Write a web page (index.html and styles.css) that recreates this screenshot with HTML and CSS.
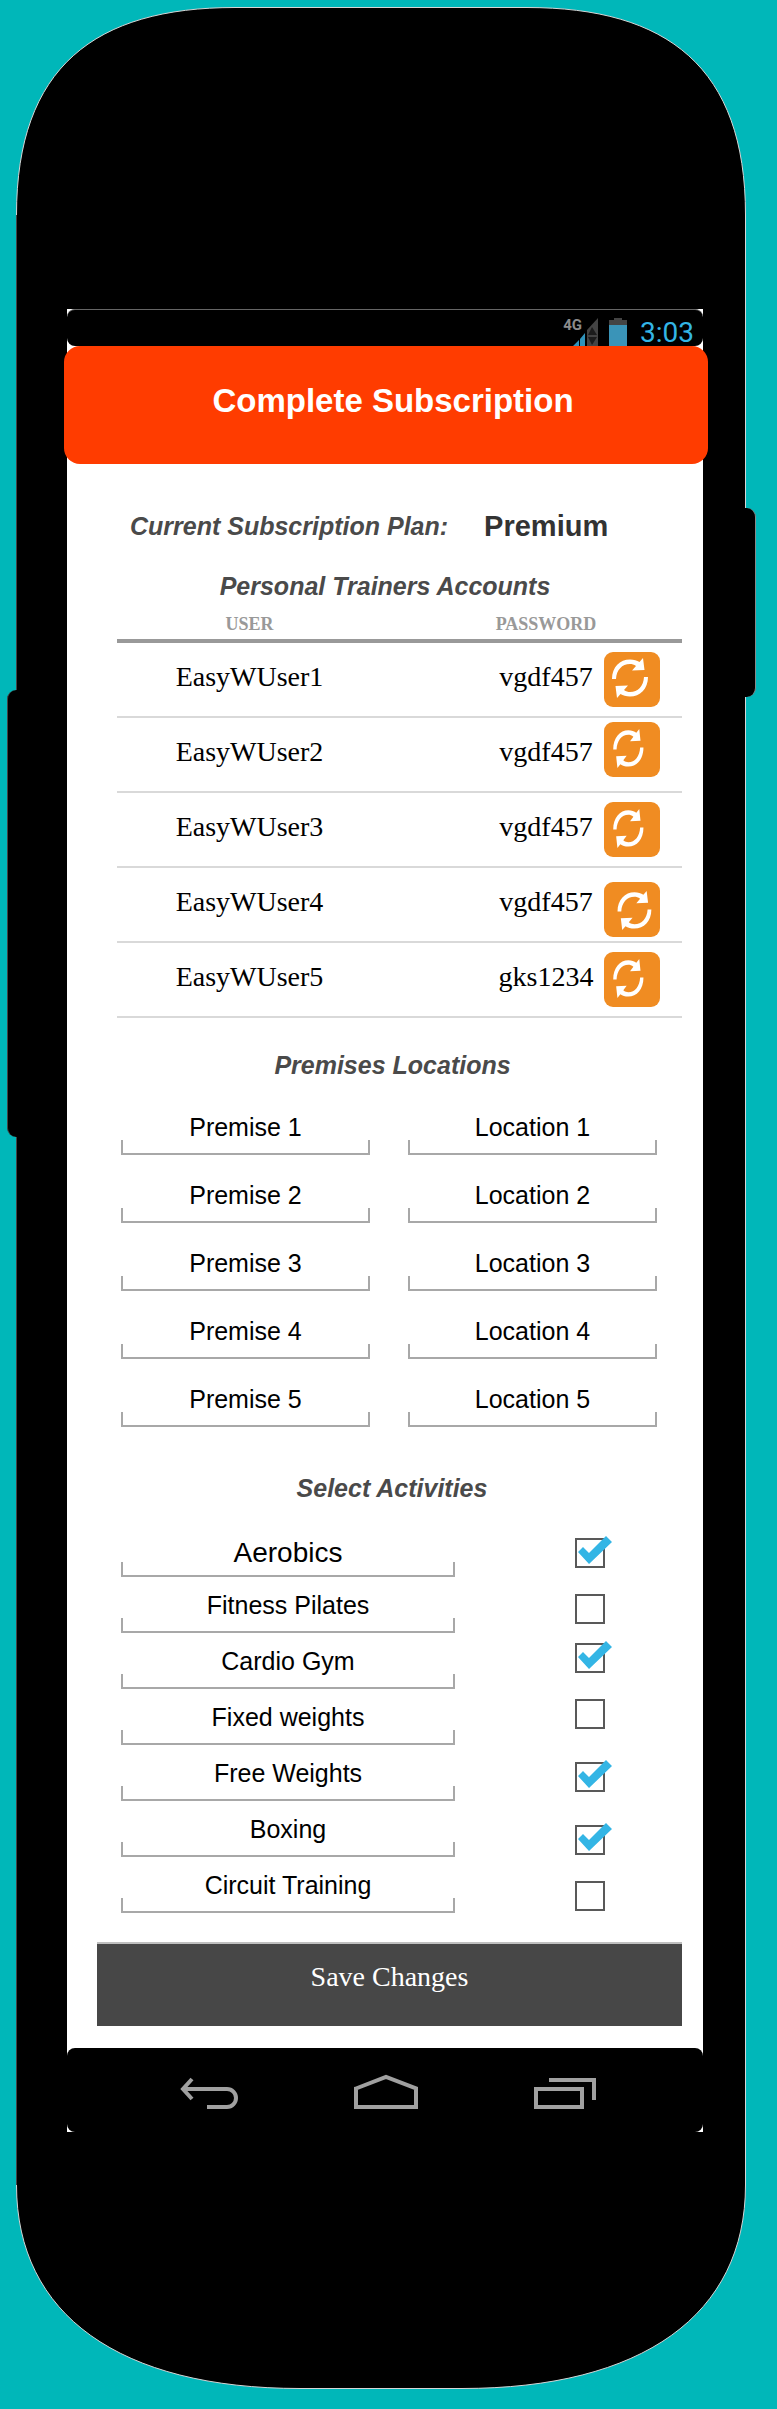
FILE: index.html
```html
<!DOCTYPE html>
<html lang="en">
<head>
<meta charset="utf-8">
<meta name="viewport" content="width=device-width, initial-scale=1">
<title>Complete Subscription</title>
<link rel="stylesheet" href="styles.css">
</head>
<body>
<svg class="sprite" aria-hidden="true">
  <defs>
    <path id="arrow" d="M8 27C8 15 16 7.500 26 7.500C30 7.500 33 8.500 35.500 10L39 6L40.500 18L28 18.500L32 14C30 12.500 28 12 26 12C18 12 12.500 18 12 27Z"/>
    <g id="arrows"><use href="#arrow"/><use href="#arrow" transform="rotate(180 26 26)"/></g>
    <symbol id="refresh-wide" viewBox="0 0 56 55"><use href="#arrows"/></symbol>
    <symbol id="refresh" viewBox="0 0 56 55"><use href="#arrows" transform="translate(2.500 1) scale(.84 .98)"/></symbol>
    <symbol id="refresh-low" viewBox="0 0 56 55"><use href="#arrows" transform="translate(6 3) scale(.94 .98)"/></symbol>
  </defs>
</svg>
<div class="device">
  <span class="side-key side-key--left"></span>
  <span class="side-key side-key--right"></span>
  <svg class="cap cap--top" viewBox="0 0 730 208" preserveAspectRatio="none" aria-hidden="true">
    <path d="M0.500 208C0.500 60 79 0.500 219 0.500H511C651 0.500 729.500 60 729.500 208"/>
  </svg>
  <div class="frame">
    <main class="screen">
      <div class="status">
        <span class="network">4G</span>
        <svg class="signal" viewBox="0 0 25 28" aria-hidden="true">
          <path fill="#2f93bb" d="M0 28L6 22V28ZM7 21L12 15V28H7Z"/>
          <path fill="#444" d="M14 12L25 0V28H14Z"/>
          <path fill="#1c1c1c" d="M15 17L19 9L24 17ZM15 19H24L19 27Z"/>
        </svg>
        <svg class="battery" viewBox="0 0 18 28" aria-hidden="true">
          <path fill="#444" d="M5 0H13V2H18V7H0V2H5Z"/>
          <path fill="#3a94b8" d="M0 7H18V28H0Z"/>
        </svg>
        <time class="clock">3:03</time>
      </div>
      <header class="header"><h1 class="title">Complete Subscription</h1></header>

      <div class="plan"><span class="plan-label">Current Subscription Plan:</span><strong class="plan-name">Premium</strong></div>

      <h2 class="heading heading--accounts">Personal Trainers Accounts</h2>
      <table class="accounts">
        <thead>
          <tr><th class="col-user" scope="col">USER</th><th class="col-password" scope="col">PASSWORD</th><td class="col-action"></td></tr>
        </thead>
        <tbody>
          <tr><td class="col-user">EasyWUser1</td><td class="col-password">vgdf457</td><td class="col-action"><button class="refresh" type="button" aria-label="New password for EasyWUser1"><svg class="refresh-icon"><use href="#refresh-wide"/></svg></button></td></tr>
          <tr><td class="col-user">EasyWUser2</td><td class="col-password">vgdf457</td><td class="col-action col-action--top"><button class="refresh" type="button" aria-label="New password for EasyWUser2"><svg class="refresh-icon"><use href="#refresh"/></svg></button></td></tr>
          <tr><td class="col-user">EasyWUser3</td><td class="col-password">vgdf457</td><td class="col-action"><button class="refresh" type="button" aria-label="New password for EasyWUser3"><svg class="refresh-icon"><use href="#refresh"/></svg></button></td></tr>
          <tr><td class="col-user">EasyWUser4</td><td class="col-password">vgdf457</td><td class="col-action col-action--bottom"><button class="refresh" type="button" aria-label="New password for EasyWUser4"><svg class="refresh-icon"><use href="#refresh-low"/></svg></button></td></tr>
          <tr><td class="col-user">EasyWUser5</td><td class="col-password">gks1234</td><td class="col-action"><button class="refresh" type="button" aria-label="New password for EasyWUser5"><svg class="refresh-icon"><use href="#refresh"/></svg></button></td></tr>
        </tbody>
      </table>

      <h2 class="heading heading--premises">Premises Locations</h2>
      <div class="premises">
        <input class="field" type="text" aria-label="Premise 1" value="Premise 1"><input class="field" type="text" aria-label="Location 1" value="Location 1">
        <input class="field" type="text" aria-label="Premise 2" value="Premise 2"><input class="field" type="text" aria-label="Location 2" value="Location 2">
        <input class="field" type="text" aria-label="Premise 3" value="Premise 3"><input class="field" type="text" aria-label="Location 3" value="Location 3">
        <input class="field" type="text" aria-label="Premise 4" value="Premise 4"><input class="field" type="text" aria-label="Location 4" value="Location 4">
        <input class="field" type="text" aria-label="Premise 5" value="Premise 5"><input class="field" type="text" aria-label="Location 5" value="Location 5">
      </div>

      <h2 class="heading heading--activities">Select Activities</h2>
      <div class="activities">
        <div class="activity"><input class="field field--large" type="text" aria-label="Activity 1" value="Aerobics"><span class="tick-cell"><input class="tick" type="checkbox" aria-label="Aerobics" checked></span></div>
        <div class="activity"><input class="field" type="text" aria-label="Activity 2" value="Fitness Pilates"><span class="tick-cell"><input class="tick" type="checkbox" aria-label="Fitness Pilates"></span></div>
        <div class="activity"><input class="field" type="text" aria-label="Activity 3" value="Cardio Gym"><span class="tick-cell tick-cell--top"><input class="tick" type="checkbox" aria-label="Cardio Gym" checked></span></div>
        <div class="activity"><input class="field" type="text" aria-label="Activity 4" value="Fixed weights"><span class="tick-cell tick-cell--top"><input class="tick" type="checkbox" aria-label="Fixed weights"></span></div>
        <div class="activity"><input class="field" type="text" aria-label="Activity 5" value="Free Weights"><span class="tick-cell"><input class="tick" type="checkbox" aria-label="Free Weights" checked></span></div>
        <div class="activity"><input class="field" type="text" aria-label="Activity 6" value="Boxing"><span class="tick-cell tick-cell--bottom"><input class="tick" type="checkbox" aria-label="Boxing" checked></span></div>
        <div class="activity"><input class="field" type="text" aria-label="Activity 7" value="Circuit Training"><span class="tick-cell tick-cell--bottom"><input class="tick" type="checkbox" aria-label="Circuit Training"></span></div>
      </div>

      <button class="save" type="button">Save Changes</button>

      <nav class="nav" aria-label="System">
        <button class="nav-key" type="button" aria-label="Back"><svg class="nav-icon" viewBox="0 0 64 36"><path d="M16 5L7 15L16 25M7 15H51A9 9 0 0 1 51 33H31"/></svg></button>
        <button class="nav-key" type="button" aria-label="Home"><svg class="nav-icon" viewBox="0 0 64 36"><path d="M2 14.500L32 3L62 14.500V33H2Z"/></svg></button>
        <button class="nav-key" type="button" aria-label="Recent apps"><svg class="nav-icon" viewBox="0 0 64 36"><path d="M4 15H50V33H4ZM17 6H62V26"/></svg></button>
      </nav>
    </main>
  </div>
  <svg class="cap cap--bottom" viewBox="0 0 730 204" preserveAspectRatio="none" aria-hidden="true">
    <path d="M0.500 0C0.500 130 104 203.500 284 203.500H446C626 203.500 729.500 130 729.500 0"/>
  </svg>
</div>
</body>
</html>
```

FILE: styles.css
```css
* {
  box-sizing: border-box;
}

body {
  margin: 0;
  background: #00b7b9;
  color: #000;
  font-family: "Liberation Sans", Arial, sans-serif;
}

button,
input {
  margin: 0;
  padding: 0;
  border: 0;
  border-radius: 0;
  font: inherit;
}

.sprite {
  position: absolute;
  width: 0;
  height: 0;
}

/* Device body */

.device {
  position: relative;
  padding: 7px 31px 20px 16px;
}

.cap {
  display: block;
  width: 100%;
  fill: #000;
  stroke: #d5d5d5;
}

.cap path {
  vector-effect: non-scaling-stroke;
}

.cap--top {
  height: 208px;
}

.cap--bottom {
  height: 204px;
}

.frame {
  padding: 94px 42px 53px 50px;
  border-right: 1px solid #d5d5d5;
  border-left: 1px solid #444;
  background: #000;
}

.side-key {
  position: absolute;
  background: #000;
}

.side-key--left {
  top: 690px;
  left: 7px;
  width: 10px;
  height: 447px;
  border-left: 1px solid #444;
  border-radius: 9px 0 0 9px;
}

.side-key--right {
  top: 508px;
  right: 21px;
  width: 11px;
  height: 189px;
  border-right: 1px solid #888;
  border-radius: 0 9px 9px 0;
}

/* Screen */

.screen {
  background: #fff;
}

.status {
  display: flex;
  align-items: flex-end;
  justify-content: flex-end;
  height: 37px;
  padding-right: 9px;
  border-top: 1px solid #666;
  border-radius: 8px;
  background: #000;
}

.network {
  align-self: flex-start;
  margin-top: 6px;
  margin-right: -9px;
  color: #8c8c8c;
  font: bold 15px/18px Roboto, sans-serif;
}

.signal {
  width: 25px;
  height: 28px;
}

.battery {
  width: 18px;
  height: 28px;
  margin-left: 11px;
}

.clock {
  margin-left: 13px;
  color: #33b5e5;
  font: 28px/26px Roboto, sans-serif;
}

.header {
  margin: 0 -5px 0 -3px;
  padding: 35px 0 43px 14px;
  border-radius: 16px;
  background: #ff3c00;
}

.title {
  margin: 0;
  color: #fff;
  font-size: 33px;
  line-height: 40px;
  text-align: center;
}

.plan {
  display: flex;
  gap: 36px;
  margin-top: 47px;
  padding-left: 63px;
  font-weight: bold;
  line-height: 30px;
}

.plan-label {
  color: #4a4a4a;
  font-size: 25px;
  font-style: italic;
}

.plan-name {
  color: #333;
  font-size: 29px;
}

.heading {
  margin: 0;
  color: #4a4a4a;
  font-size: 25px;
  font-style: italic;
  line-height: 30px;
  text-align: center;
}

.heading--accounts {
  margin-top: 30px;
}

.heading--premises {
  margin-top: 32px;
  padding-left: 15px;
}

.heading--activities {
  margin-top: 46px;
  padding-left: 14px;
}

/* Accounts table */

.accounts {
  width: calc(100% - 71px);
  margin: 13px 21px 0 50px;
  border-spacing: 0;
  table-layout: fixed;
  font-family: "Liberation Serif", "Times New Roman", serif;
  text-align: center;
}

.accounts th,
.accounts td {
  padding: 0 0 5px;
}

.accounts thead th,
.accounts thead td {
  border-bottom: 4px solid #999;
  color: #999;
  font-size: 18px;
  line-height: 20px;
}

.accounts tbody td {
  height: 75px;
  border-bottom: 2px solid #d9d9d9;
  font-size: 28px;
  line-height: 32px;
}

.accounts .col-password {
  width: 218px;
  padding-left: 110px;
}

.accounts .col-action {
  width: 82px;
  padding: 4px 0 4px 4px;
  line-height: 0;
  text-align: left;
}

.accounts .col-action--top {
  vertical-align: top;
}

.accounts .col-action--bottom {
  vertical-align: bottom;
}

.refresh {
  width: 56px;
  height: 55px;
  border-radius: 9px;
  background: #f08c22;
}

.refresh-icon {
  display: block;
  width: 56px;
  height: 55px;
  fill: #fff;
}

/* Fields */

.field {
  display: block;
  width: 100%;
  min-width: 0;
  height: 48px;
  padding-bottom: 7px;
  background:
    linear-gradient(#a8a8a8, #a8a8a8) left bottom / 2px 15px no-repeat,
    linear-gradient(#a8a8a8, #a8a8a8) right bottom / 2px 15px no-repeat,
    linear-gradient(#a8a8a8, #a8a8a8) left bottom / 100% 2px no-repeat;
  font-size: 25px;
  text-align: center;
}

.field--large {
  padding-bottom: 0;
  font-size: 28px;
}

.premises {
  display: grid;
  grid-template-columns: 1fr 1fr;
  gap: 20px 38px;
  margin-top: 27px;
  padding: 0 46px 0 54px;
}

.activities {
  margin-top: 18px;
  padding-left: 54px;
}

.activity {
  display: grid;
  grid-template-columns: 1fr 248px;
  align-items: end;
  height: 56px;
}

.tick-cell {
  display: flex;
  align-items: center;
  height: 56px;
  padding: 10px 0 2px 120px;
}

.tick-cell--top {
  align-items: flex-start;
}

.tick-cell--bottom {
  align-items: flex-end;
}

.tick {
  position: relative;
  width: 30px;
  height: 30px;
  border: 2px solid #595959;
  background: #fff;
  appearance: none;
}

.tick:checked::after {
  position: absolute;
  top: -4px;
  left: 1px;
  width: 34px;
  height: 28px;
  background: #33b5e5;
  clip-path: polygon(0 16px, 5px 11px, 11px 17px, 28px 0, 34px 6px, 11px 28px);
  content: "";
}

/* Actions */

.save {
  display: block;
  width: calc(100% - 51px);
  height: 84px;
  margin: 29px 21px 22px 30px;
  padding-bottom: 16px;
  border-top: 2px solid #bfbfbf;
  background: #474747;
  color: #fff;
  font: 28px/32px "Liberation Serif", "Times New Roman", serif;
}

.nav {
  display: grid;
  grid-template-columns: repeat(3, 1fr);
  height: 84px;
  padding: 3px 50px 0 52px;
  border-radius: 8px;
  background: #000;
}

.nav-key {
  display: flex;
  align-items: center;
  justify-content: center;
  background: none;
}

.nav-icon {
  width: 64px;
  height: 36px;
  fill: none;
  stroke: #a0a0a0;
  stroke-width: 4;
}
```
